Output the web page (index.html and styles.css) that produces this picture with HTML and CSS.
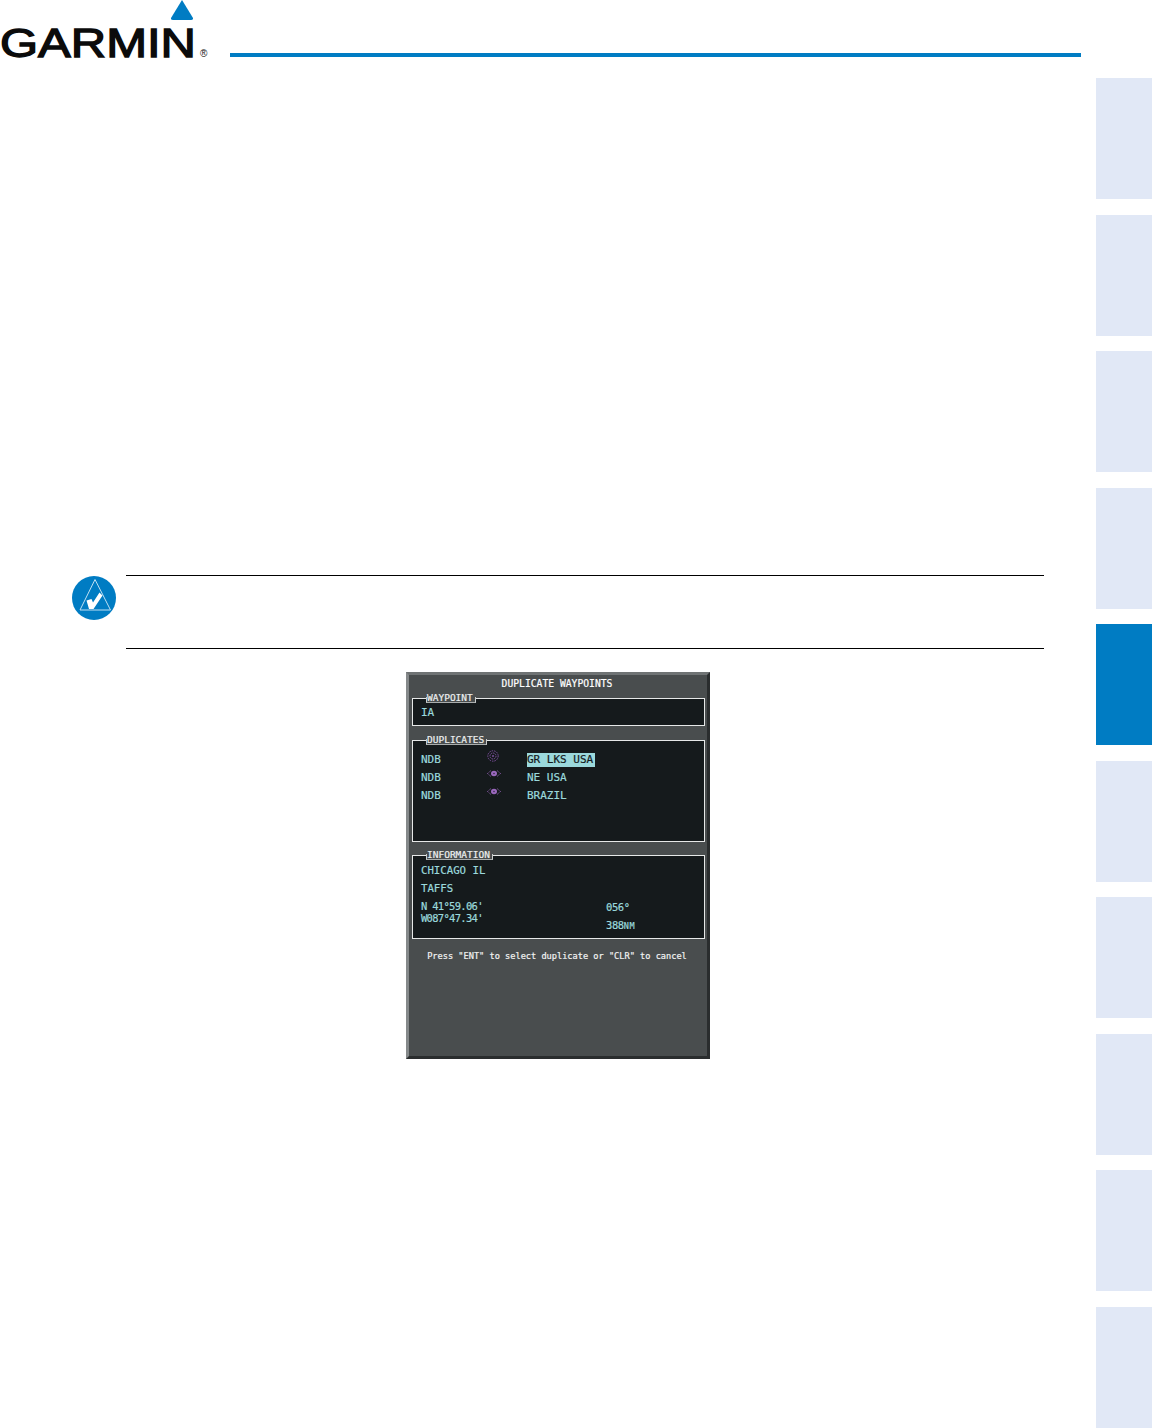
FILE: index.html
```html
<!DOCTYPE html>
<html lang="en">
<head>
<meta charset="utf-8">
<title>Duplicate Waypoints</title>
<link rel="stylesheet" href="styles.css">
</head>
<body>
<div class="page">
  <main class="main">
    <header class="header">
      <div class="logo">
        <svg class="logo-mark" viewBox="0 0 22 20" width="22" height="20" aria-hidden="true"><path d="M11 0 L22 18 Q22.500 20 20 20 L2 20 Q-0.500 20 0 18 Z" fill="#007cc3"/></svg>
        <span class="logo-word">GARMIN</span>
        <span class="logo-reg">®</span>
      </div>
      <div class="header-rule"></div>
    </header>
    <section class="note">
      <svg class="note-icon" viewBox="0 0 44 44" width="44" height="44" aria-hidden="true">
        <circle cx="22" cy="22" r="22" fill="#007cc3"/>
        <path d="M23 3.500 L38.500 34 L8 34 Z" fill="none" stroke="#bfe0f3" stroke-width="1"/>
        <path d="M14.500 24.500 L19.500 23 L21 26.500 L27.500 16.500 L30.500 19.500 L21.500 33 L17 33 Z" fill="#fff"/>
      </svg>
      <div class="note-body"></div>
    </section>
    <figure class="panel">
      <h1 class="panel-title">DUPLICATE WAYPOINTS</h1>
      <div class="box box-waypoint">
        <span class="legend">WAYPOINT</span>
        <div class="row"><span class="val">IA</span></div>
      </div>
      <div class="box box-dups">
        <span class="legend">DUPLICATES</span>
        <div class="dup-list">
          <div class="dup">
            <span class="val">NDB</span>
            <svg class="wp wp-up" viewBox="0 0 12 12" width="12" height="12" aria-hidden="true"><g fill="none" stroke="#7d4f9e"><circle cx="6" cy="6" r="5.200" stroke-dasharray="1.500 1"/><circle cx="6" cy="6" r="3" stroke-dasharray="1.500 .8"/></g><circle cx="6" cy="6" r="1" fill="#7d4f9e"/></svg>
            <span class="val hl">GR LKS USA</span>
          </div>
          <div class="dup">
            <span class="val">NDB</span>
            <svg class="wp" viewBox="0 0 14 9" width="14" height="9" aria-hidden="true"><path d="M.5 4.500 L4 1.500 M.5 4.500 L4 7.500 M13.500 4.500 L10 1.500 M13.500 4.500 L10 7.500" stroke="#8a5cab" stroke-dasharray="1 .7" fill="none"/><ellipse cx="7" cy="4.500" rx="3" ry="2.700" fill="#9a68bd"/><circle cx="7" cy="4.500" r=".8" fill="#3a2a48"/></svg>
            <span class="val">NE USA</span>
          </div>
          <div class="dup">
            <span class="val">NDB</span>
            <svg class="wp" viewBox="0 0 14 9" width="14" height="9" aria-hidden="true"><path d="M.5 4.500 L4 1.500 M.5 4.500 L4 7.500 M13.500 4.500 L10 1.500 M13.500 4.500 L10 7.500" stroke="#8a5cab" stroke-dasharray="1 .7" fill="none"/><ellipse cx="7" cy="4.500" rx="3" ry="2.700" fill="#9a68bd"/><circle cx="7" cy="4.500" r=".8" fill="#3a2a48"/></svg>
            <span class="val">BRAZIL</span>
          </div>
        </div>
      </div>
      <div class="box box-info">
        <span class="legend">INFORMATION</span>
        <div class="info-line val">CHICAGO IL</div>
        <div class="info-line val">TAFFS</div>
        <div class="info-grid">
          <div class="coords val">N 41°59.06'<br>W087°47.34'</div>
          <div class="bearing val"><span>056°</span><span>388<small>NM</small></span></div>
        </div>
      </div>
      <p class="prompt">Press "ENT" to select duplicate or "CLR" to cancel</p>
    </figure>
  </main>
  <nav class="tabs" aria-label="Sections">
    <div class="tab"></div>
    <div class="tab"></div>
    <div class="tab"></div>
    <div class="tab"></div>
    <div class="tab tab-active"></div>
    <div class="tab"></div>
    <div class="tab"></div>
    <div class="tab"></div>
    <div class="tab"></div>
    <div class="tab"></div>
  </nav>
</div>
</body>
</html>
```
FILE: styles.css
```css
* { box-sizing: border-box; }
html, body { margin: 0; padding: 0; background: #fff; }
.page {
  width: 1152px;
  height: 1428px;
  display: grid;
  grid-template-columns: 1fr 56px;
  overflow: hidden;
  font-family: "Liberation Sans", sans-serif;
}
.main { display: flex; flex-direction: column; min-width: 0; }
.tabs {
  display: flex;
  flex-direction: column;
  justify-content: space-between;
  padding-top: 78px;
}
.tab { height: 121px; background: #e1e8f6; }
.tab-active { background: #007cc3; }

.header { height: 58px; display: flex; align-items: flex-end; padding-right: 15px; }
.logo { position: relative; width: 230px; height: 58px; flex: none; }
.logo-mark { position: absolute; left: 171px; top: 0; }
.logo-word {
  position: absolute;
  left: 0;
  top: 20px;
  font-size: 40px;
  line-height: 46px;
  font-weight: 400;
  color: #0b0b0b;
  -webkit-text-stroke: 1.300px #0b0b0b;
  transform: scaleX(1.225);
  transform-origin: 0 0;
}
.logo-reg { position: absolute; left: 200px; top: 48px; font-size: 10px; line-height: 12px; color: #111; }
.header-rule { flex: 1; height: 4px; margin-bottom: 1px; background: #007cc3; }

.note {
  margin-top: 517px;
  display: flex;
  align-items: flex-start;
  padding: 0 52px 0 72px;
  gap: 10px;
}
.note-icon { flex: none; margin-top: 1px; }
.note-body {
  flex: 1;
  height: 74px;
  border-top: 1px solid #000;
  border-bottom: 1px solid #000;
}

.panel {
  margin: 23px 0 0 406px;
  width: 304px;
  height: 387px;
  padding: 3px 5px 0 3px;
  background: #494d4e;
  border-top: 3px solid #6f7374;
  border-left: 3px solid #85898a;
  border-right: 3px solid #2a2d2e;
  border-bottom: 3px solid #2a2d2e;
  font-family: "DejaVu Sans Mono", monospace;
  color: #fff;
  -webkit-text-stroke: .2px;
}
.panel-title {
  margin: 0;
  font-size: 9.700px;
  font-weight: 400;
  line-height: 12px;
  text-align: center;
}
.box {
  position: relative;
  background: #151a1c;
  border: 1px solid #e6e8e8;
  width: 293px;
}
.legend {
  position: absolute;
  left: 13px;
  top: -7px;
  padding: 0 3px 0 1px;
  font-size: 9.500px;
  line-height: 11px;
  height: 11px;
  color: #eef0f0;
  background: #494d4e;
}
.legend::after {
  content: "";
  position: absolute;
  left: 0;
  right: 0;
  bottom: 0;
  height: 5px;
  border-left: 1px solid #c8cbcb;
  border-right: 1px solid #c8cbcb;
  border-bottom: 1px solid #a9adad;
}
.val { font-size: 11px; line-height: 14px; color: #9bd9dc; }
.box-waypoint { margin-top: 8px; height: 28px; }
.row { display: flex; padding: 7px 8px 0; }
.box-dups { margin-top: 14px; height: 102px; }
.dup-list { padding-top: 12px; display: flex; flex-direction: column; gap: 4.200px; }
.dup {
  display: grid;
  grid-template-columns: 66px 40px auto;
  justify-items: start;
  align-items: center;
  padding-left: 8px;
  height: 14px;
}
.wp { margin-top: -9px; }
.wp-up { margin-top: -8px; }
.hl { background: #9bd9dc; color: #14191b; padding-right: 2px; }
.box-info { margin-top: 13px; height: 84px; padding: 8px 8px 0; }
.info-line { height: 18px; font-size: 10.700px; }
.info-grid {
  display: grid;
  grid-template-columns: 185px auto;
}
.coords { font-size: 10.500px; line-height: 12px; letter-spacing: -.7px; }
.bearing { display: flex; flex-direction: column; gap: 4px; line-height: 14px; font-size: 10.500px; letter-spacing: -.4px; }
.bearing small { font-size: 8.500px; letter-spacing: .6px; }
.prompt {
  margin: 11px 0 0;
  font-size: 8.650px;
  line-height: 12px;
  text-align: center;
  color: #f2f3f3;
}
```
